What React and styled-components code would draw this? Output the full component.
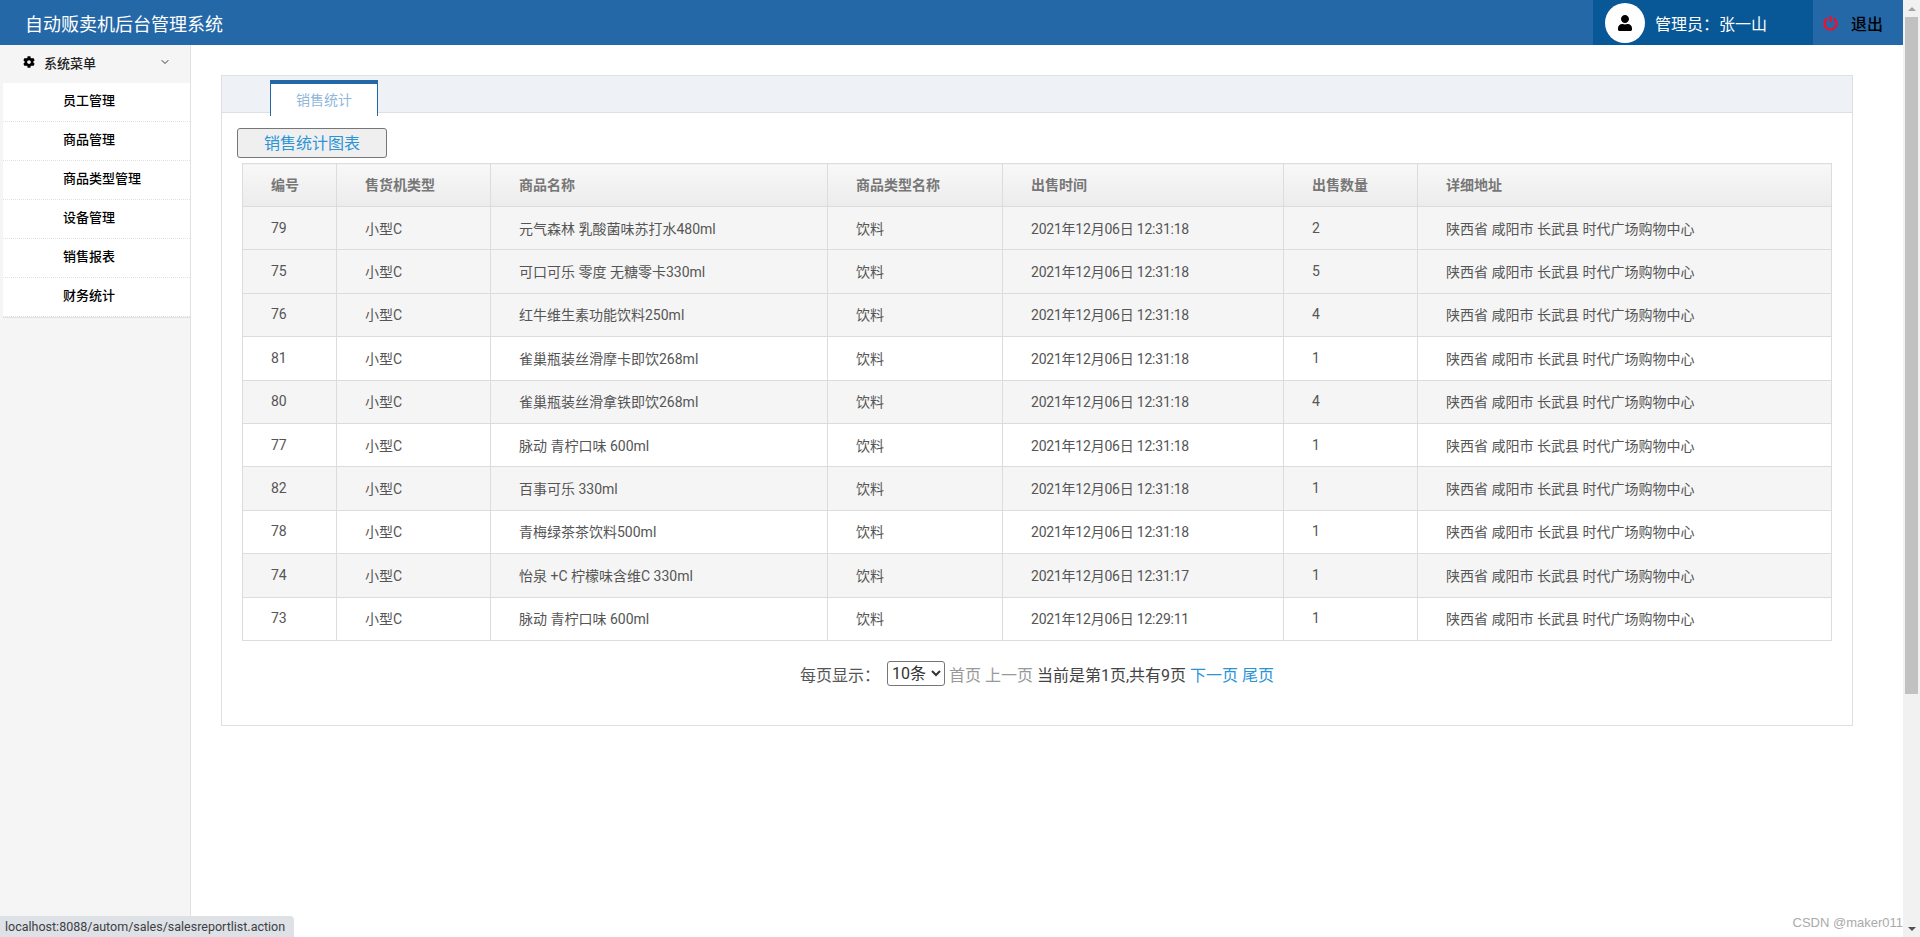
import React from 'react';
import styled, { createGlobalStyle } from 'styled-components';
import { FaCog, FaUser } from 'react-icons/fa';
import { FiChevronDown } from 'react-icons/fi';

const GlobalStyle = createGlobalStyle`
  html, body {
    margin: 0;
    height: 100%;
    overflow: hidden;
    background: #fff;
  }
  body {
    font-family: Roboto, 'Noto Sans CJK SC', sans-serif;
    font-size: 14px;
    color: #555;
  }
  * {
    box-sizing: border-box;
  }
`;

const menus = ['员工管理', '商品管理', '商品类型管理', '设备管理', '销售报表', '财务统计'];

const ADDRESS = '陕西省 咸阳市 长武县 时代广场购物中心';
const columns = [
  { title: '编号', width: 94 },
  { title: '售货机类型', width: 154 },
  { title: '商品名称', width: 337 },
  { title: '商品类型名称', width: 175 },
  { title: '出售时间', width: 281 },
  { title: '出售数量', width: 134 },
  { title: '详细地址', width: 414 },
];

const sales = [
  { id: 79, name: '元气森林 乳酸菌味苏打水480ml', time: '12:31:18', count: 2, shaded: true },
  { id: 75, name: '可口可乐 零度 无糖零卡330ml', time: '12:31:18', count: 5, shaded: true },
  { id: 76, name: '红牛维生素功能饮料250ml', time: '12:31:18', count: 4, shaded: true },
  { id: 81, name: '雀巢瓶装丝滑摩卡即饮268ml', time: '12:31:18', count: 1 },
  { id: 80, name: '雀巢瓶装丝滑拿铁即饮268ml', time: '12:31:18', count: 4, shaded: true },
  { id: 77, name: '脉动 青柠口味 600ml', time: '12:31:18', count: 1 },
  { id: 82, name: '百事可乐 330ml', time: '12:31:18', count: 1, shaded: true },
  { id: 78, name: '青梅绿茶茶饮料500ml', time: '12:31:18', count: 1 },
  { id: 74, name: '怡泉 +C 柠檬味含维C 330ml', time: '12:31:17', count: 1, shaded: true },
  { id: 73, name: '脉动 青柠口味 600ml', time: '12:29:11', count: 1 },
];

const PowerIcon = () => (
  <svg width="15" height="16" viewBox="0 0 15 16" fill="none" stroke="#f0102c" strokeWidth="2.4">
    <path d="M4.2 3.6a6 6 0 1 0 6.6 0" />
    <path d="M7.5 0.8v6.4" />
  </svg>
);

const App = () => {
  return (
    <>
      <GlobalStyle />
      <Window>
        <Page>
          <Header>
            <Title>自动贩卖机后台管理系统</Title>
            <UserBox>
              <Avatar>
                <FaUser />
              </Avatar>
              <UserName>管理员：张一山</UserName>
            </UserBox>
            <Logout>
              <PowerIcon />
              <span>退出</span>
            </Logout>
          </Header>
          <Body>
            <Sidebar>
              <MenuHead>
                <FaCog className="cog" />
                <span>系统菜单</span>
                <FiChevronDown className="chevron" />
              </MenuHead>
              <MenuList>
                {menus.map((menu) => (
                  <MenuItem key={menu}>{menu}</MenuItem>
                ))}
              </MenuList>
            </Sidebar>
            <Main>
              <Panel>
                <TabBar>
                  <Tab>销售统计</Tab>
                </TabBar>
                <PanelBody>
                  <ChartButton>销售统计图表</ChartButton>
                  <Table>
                    <colgroup>
                      {columns.map((col) => (
                        <col key={col.title} style={{ width: col.width }} />
                      ))}
                    </colgroup>
                    <thead>
                      <tr>
                        {columns.map((col) => (
                          <Th key={col.title}>{col.title}</Th>
                        ))}
                      </tr>
                    </thead>
                    <tbody>
                      {sales.map((row) => (
                        <Row key={row.id} $shaded={row.shaded}>
                          <Td>{row.id}</Td>
                          <Td>小型C</Td>
                          <Td>{row.name}</Td>
                          <Td>饮料</Td>
                          <Td $tight>2021年12月06日 {row.time}</Td>
                          <Td>{row.count}</Td>
                          <Td>{ADDRESS}</Td>
                        </Row>
                      ))}
                    </tbody>
                  </Table>
                  <Pager>
                    <PagerLabel>每页显示：</PagerLabel>
                    <PageSize defaultValue="10">
                      <option value="10">10条</option>
                      <option value="20">20条</option>
                    </PageSize>
                    <PagerLink>首页</PagerLink>
                    <PagerLink>上一页</PagerLink>
                    <PagerText>当前是第1页,共有9页</PagerText>
                    <PagerLink $active>下一页</PagerLink>
                    <PagerLink $active>尾页</PagerLink>
                  </Pager>
                </PanelBody>
              </Panel>
            </Main>
          </Body>
          <StatusBar>localhost:8088/autom/sales/salesreportlist.action</StatusBar>
          <Watermark>CSDN @maker011</Watermark>
        </Page>
        <Scrollbar>
          <ScrollArrow />
          <ScrollTrack>
            <ScrollThumb />
          </ScrollTrack>
          <ScrollArrow $down />
        </Scrollbar>
      </Window>
    </>
  );
};

const Window = styled.div`
  display: flex;
  width: 100%;
  height: 937px;
  overflow: hidden;
`;

const Page = styled.div`
  position: relative;
  flex: 1;
  min-width: 0;
  display: flex;
  flex-direction: column;
`;

const Header = styled.header`
  height: 45px;
  flex-shrink: 0;
  display: flex;
  align-items: center;
  background-color: #2468a8;
`;

const Title = styled.div`
  flex: 1;
  padding-left: 25px;
  font-size: 18px;
  color: #fff;
`;

const UserBox = styled.div`
  width: 220px;
  height: 100%;
  display: flex;
  align-items: center;
  gap: 10px;
  padding-left: 12px;
  background-color: #085797;
  color: #fff;
  font-size: 16px;
`;

const Avatar = styled.div`
  width: 40px;
  height: 40px;
  border-radius: 50%;
  background-color: #fff;
  color: #000;
  display: flex;
  align-items: center;
  justify-content: center;
  font-size: 16px;
`;

const UserName = styled.span`
  white-space: nowrap;
`;

const Logout = styled.div`
  width: 90px;
  height: 100%;
  display: flex;
  align-items: center;
  gap: 13px;
  padding-left: 10px;
  color: #000;
  font-size: 16px;
  font-weight: 500;
`;

const Body = styled.div`
  flex: 1;
  display: flex;
  min-height: 0;
`;

const Sidebar = styled.aside`
  width: 191px;
  flex-shrink: 0;
  background-color: #f5f5f5;
  border-right: 1px solid #e1e1e1;
`;

const MenuHead = styled.div`
  height: 38px;
  display: flex;
  align-items: center;
  padding: 0 0 4px 23px;
  font-size: 13px;
  font-weight: 500;
  color: #222;
  .cog {
    font-size: 12px;
    color: #000;
    margin-right: 9px;
  }
  .chevron {
    margin-left: 63px;
    font-size: 12px;
    color: #333;
  }
`;

const MenuList = styled.ul`
  list-style: none;
  margin: 0 0 0 3px;
  padding: 0;
  background-color: #fff;
  border-bottom: 1px solid #e1e1e1;
`;

const MenuItem = styled.li`
  height: 39px;
  line-height: 36px;
  padding-left: 60px;
  font-size: 13px;
  font-weight: 500;
  color: #000;
  border-bottom: 1px dotted #e1e1e1;
`;

const Main = styled.main`
  flex: 1;
  min-width: 0;
  padding: 30px 50px 0 30px;
`;

const Panel = styled.section`
  height: 651px;
  border: 1px solid #dfdfdf;
`;

const TabBar = styled.div`
  height: 37px;
  padding: 4px 0 0 48px;
  background-color: #eef1f6;
  border-bottom: 1px solid #dfdfdf;
`;

const Tab = styled.div`
  width: 108px;
  height: 36px;
  padding-top: 2px;
  text-align: center;
  line-height: 29px;
  font-size: 14px;
  color: #8fb6dc;
  background-color: #fff;
  border: 1px solid #2468a8;
  border-top: 4px solid #2468a8;
  border-bottom: none;
`;

const PanelBody = styled.div`
  padding: 15px 15px 0 15px;
`;

const ChartButton = styled.button`
  display: block;
  width: 150px;
  height: 30px;
  padding: 1px 0 0;
  font-family: inherit;
  font-size: 16px;
  line-height: 28px;
  color: #2a94d6;
  background-color: #efefef;
  border: 1px solid #767676;
  border-radius: 3px;
`;

const Table = styled.table`
  width: 1589px;
  margin: 5px 0 0 5px;
  table-layout: fixed;
  border-collapse: collapse;
`;

const Th = styled.th`
  height: 43px;
  padding: 0 0 2px 28px;
  text-align: left;
  font-size: 14px;
  font-weight: 700;
  color: #777;
  background: linear-gradient(to bottom, #f8f8f8, #ececec);
  border: 1px solid #dcdcdc;
`;

const Row = styled.tr`
  height: 43.4px;
  background-color: ${({ $shaded }) => ($shaded ? '#f5f5f5' : '#fff')};
`;

const Td = styled.td`
  padding: 0 0 1px 28px;
  font-size: 14px;
  color: #555;
  white-space: nowrap;
  letter-spacing: ${({ $tight }) => ($tight ? '-0.22px' : 'normal')};
  border: 1px solid #dcdcdc;
`;

const Pager = styled.div`
  display: flex;
  align-items: center;
  justify-content: center;
  height: 24px;
  margin-top: 21px;
  font-size: 16px;
  gap: 4px;
`;

const PagerLabel = styled.span`
  margin-right: 3px;
  color: #555;
`;

const PageSize = styled.select`
  width: 58px;
  height: 25px;
  padding: 0;
  font-family: inherit;
  font-size: 16px;
  color: #333;
  background-color: #fff;
  border: 1px solid #767676;
  border-radius: 3px;
`;

const PagerLink = styled.span`
  color: ${({ $active }) => ($active ? '#2a94d6' : '#999')};
`;

const PagerText = styled.span`
  color: #444;
`;

const StatusBar = styled.div`
  position: absolute;
  left: 0;
  bottom: 0;
  height: 21px;
  padding: 0 9px 0 5px;
  line-height: 21px;
  font-size: 12.5px;
  color: #3c4043;
  background-color: #dee1e6;
  border-top-right-radius: 4px;
`;

const Watermark = styled.div`
  position: absolute;
  right: 0;
  bottom: 7px;
  font-family: 'Liberation Sans', sans-serif;
  font-size: 13px;
  color: #aaa;
`;

const Scrollbar = styled.div`
  width: 17px;
  flex-shrink: 0;
  display: flex;
  flex-direction: column;
  background-color: #f1f1f1;
`;

const ScrollArrow = styled.div`
  height: 17px;
  flex-shrink: 0;
  display: flex;
  align-items: center;
  justify-content: center;
  &::after {
    content: '';
    width: 0;
    height: 0;
    border-left: 4px solid transparent;
    border-right: 4px solid transparent;
    ${({ $down }) =>
      $down ? 'border-top: 4px solid #505050;' : 'border-bottom: 4px solid #a3a3a3;'}
  }
`;

const ScrollTrack = styled.div`
  flex: 1;
  padding: 0 2px;
`;

const ScrollThumb = styled.div`
  height: 677px;
  background-color: #c1c1c1;
`;

export default App;
